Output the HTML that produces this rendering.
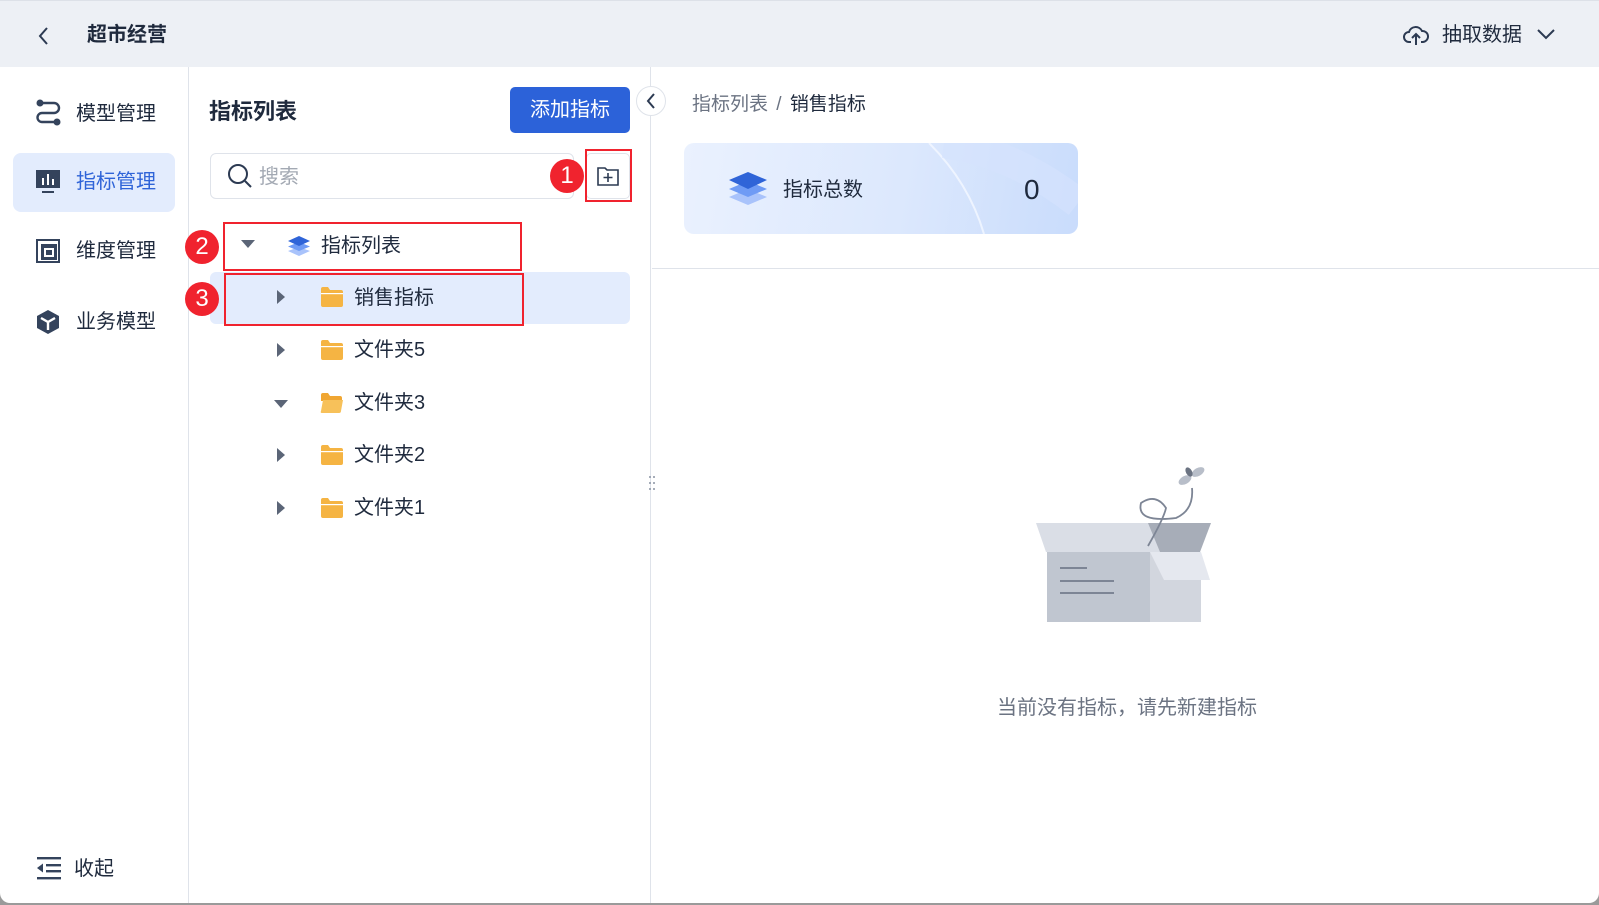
<!DOCTYPE html>
<html><head><meta charset="utf-8">
<style>
*{margin:0;padding:0;box-sizing:border-box}
body{width:1599px;height:905px;overflow:hidden;background:#9a9a9a;font-family:"Liberation Sans","Noto Sans CJK SC",sans-serif;color:#1f2a3d;position:relative}
.win{position:absolute;left:0;top:0;width:1599px;height:903px;background:#fff;border-radius:0 0 10px 10px;overflow:hidden}
.hdr{position:absolute;left:0;top:0;width:1599px;height:67px;background:#edf0f5;border-top:1px solid #dde1e8}
.abs{position:absolute;white-space:nowrap}
.t20{font-size:20px;line-height:24px}
.side{position:absolute;left:0;top:67px;width:189px;height:836px;border-right:1px solid #dfe3ea}
.mid{position:absolute;left:189px;top:67px;width:462px;height:836px;border-right:1px solid #dfe3ea}
.sel{position:absolute;left:13px;top:153px;width:162px;height:59px;background:#e3ecfd;border-radius:8px}
.red{position:absolute;border:2px solid #f0232e}
.badge{position:absolute;width:34px;height:34px;border-radius:50%;background:#f0232e;color:#fff;font-size:24px;line-height:34px;text-align:center}
</style></head><body>
<div class="win">
<div class="hdr">
  <svg class="abs" style="left:37px;top:25px" width="14" height="20" viewBox="0 0 14 20"><path d="M10 2 L3 10 L10 18" fill="none" stroke="#2c3a52" stroke-width="2"/></svg>
  <div class="abs" style="left:87px;top:22px;font-size:20px;font-weight:bold;line-height:24px">超市经营</div>
  <svg class="abs" style="left:1403px;top:22px" width="26" height="24" viewBox="0 0 26 24"><path d="M8 19 H6 A5 5 0 0 1 6 9 A7 7 0 0 1 19 8 A5.5 5.5 0 0 1 20 19 H18" fill="none" stroke="#2c3a52" stroke-width="2"/><path d="M13 22 V12 M9 15 L13 11 L17 15" fill="none" stroke="#2c3a52" stroke-width="2"/></svg>
  <div class="abs t20" style="left:1442px;top:22px">抽取数据</div>
  <svg class="abs" style="left:1536px;top:27px" width="20" height="12" viewBox="0 0 20 12"><path d="M2 2 L10 10 L18 2" fill="none" stroke="#2c3a52" stroke-width="2"/></svg>
</div>

<div class="side"></div>
<div class="sel"></div>
<svg class="abs" style="left:35px;top:99px" width="26" height="28" viewBox="0 0 26 28"><circle cx="5" cy="4" r="3.5" fill="#34435c"/><circle cx="22" cy="23" r="3.5" fill="#34435c"/><path d="M5 4 H19 A5 5 0 0 1 19 14 H7 A4.5 4.5 0 0 0 7 23 H22" fill="none" stroke="#34435c" stroke-width="2.4"/></svg>
<div class="abs t20" style="left:76px;top:102px">模型管理</div>
<svg class="abs" style="left:36px;top:170px" width="24" height="24" viewBox="0 0 24 24"><rect x="0" y="0" width="24" height="18" fill="#34435c"/><rect x="6" y="8" width="2" height="7" fill="#fff"/><rect x="11" y="4" width="2" height="11" fill="#fff"/><rect x="16" y="9" width="2" height="6" fill="#fff"/><rect x="6" y="21" width="12" height="2" fill="#34435c"/></svg>
<div class="abs t20" style="left:76px;top:170px;color:#2f64d8">指标管理</div>
<svg class="abs" style="left:36px;top:239px" width="24" height="24" viewBox="0 0 24 24"><rect x="1" y="1" width="22" height="22" fill="none" stroke="#34435c" stroke-width="2"/><rect x="5" y="5" width="16" height="16" fill="#34435c"/><rect x="9" y="10" width="8" height="7" fill="none" stroke="#fff" stroke-width="2"/></svg>
<div class="abs t20" style="left:76px;top:239px">维度管理</div>
<svg class="abs" style="left:36px;top:309px" width="24" height="26" viewBox="0 0 24 26"><path d="M12 1 L23 7 V19 L12 25 L1 19 V7 Z" fill="#34435c"/><path d="M5 9 L12 13 L19 9 M12 13 V21" fill="none" stroke="#fff" stroke-width="2.4"/></svg>
<div class="abs t20" style="left:76px;top:310px">业务模型</div>
<svg class="abs" style="left:37px;top:856px" width="24" height="24" viewBox="0 0 24 24"><rect x="0" y="1" width="24" height="2.4" fill="#34435c"/><rect x="9" y="8" width="15" height="2.4" fill="#34435c"/><rect x="9" y="14" width="15" height="2.4" fill="#34435c"/><rect x="0" y="21" width="24" height="2.4" fill="#34435c"/><path d="M0 12 L6 7.5 V16.5 Z" fill="#34435c"/></svg>
<div class="abs t20" style="left:74px;top:857px">收起</div>

<div class="mid"></div>
<div class="abs" style="left:209px;top:99px;font-size:22px;font-weight:bold;line-height:26px">指标列表</div>
<div class="abs" style="left:510px;top:87px;width:120px;height:46px;background:#2c62d9;border-radius:5px;color:#fff;font-size:20px;line-height:46px;text-align:center">添加指标</div>
<div class="abs" style="left:636px;top:86px;width:30px;height:30px;border:1px solid #dfe3ea;border-radius:50%;background:#fff"></div>
<svg class="abs" style="left:645px;top:92px" width="12" height="18" viewBox="0 0 12 18"><path d="M9 2 L3 9 L9 16" fill="none" stroke="#2c3a52" stroke-width="2"/></svg>
<div class="abs" style="left:210px;top:153px;width:364px;height:46px;border:1px solid #dfe3ea;border-radius:6px"></div>
<svg class="abs" style="left:227px;top:163px" width="26" height="26" viewBox="0 0 26 26"><circle cx="11" cy="11" r="9" fill="none" stroke="#2c3a52" stroke-width="2"/><path d="M18 18 L24 24" stroke="#2c3a52" stroke-width="2"/></svg>
<div class="abs t20" style="left:259px;top:165px;color:#a3a9b3">搜索</div>
<div class="abs" style="left:586px;top:153px;width:44px;height:46px;border:1px solid #dfe3ea;border-radius:5px"></div>
<svg class="abs" style="left:597px;top:166px" width="22" height="20" viewBox="0 0 22 20"><path d="M1 2 H8 L10 4 H21 V19 H1 Z" fill="none" stroke="#2c3a52" stroke-width="1.6"/><path d="M11 7 V16 M6.5 11.5 H15.5" stroke="#2c3a52" stroke-width="1.6"/></svg>
<div class="red" style="left:585px;top:149px;width:47px;height:53px"></div>
<div class="badge" style="left:550px;top:159px">1</div>

<svg class="abs" style="left:241px;top:240px" width="14" height="9" viewBox="0 0 14 9"><path d="M0 0 H14 L7 8 Z" fill="#5b6577"/></svg>
<svg class="abs" style="left:287px;top:235px" width="24" height="22" viewBox="0 0 24 22"><path d="M12 12 L23 16 L12 21 L1 16 Z" fill="#a9c3fb"/><path d="M12 7 L23 11.5 L12 16 L1 11.5 Z" fill="#6f9bf5"/><path d="M12 1 L23 6 L12 11 L1 6 Z" fill="#2f64d8"/></svg>
<div class="abs t20" style="left:321px;top:234px">指标列表</div>
<div class="red" style="left:223px;top:222px;width:299px;height:49px"></div>
<div class="badge" style="left:185px;top:230px">2</div>

<div class="abs" style="left:210px;top:272px;width:420px;height:52px;background:#e3ecfd;border-radius:6px"></div>
<div class="red" style="left:224px;top:273px;width:300px;height:53px"></div>
<div class="badge" style="left:185px;top:282px">3</div>

<svg class="abs" style="left:277px;top:290px" width="9" height="14" viewBox="0 0 9 14"><path d="M0 0 L8 7 L0 14 Z" fill="#5b6577"/></svg>
<svg class="abs" style="left:320px;top:287px" width="23" height="20" viewBox="0 0 23 20"><path d="M1 2 Q1 0 3 0 H8 L10 3 H21 Q23 3 23 5 V18 Q23 20 21 20 H3 Q1 20 1 18 Z" fill="#f5b443"/><rect x="1" y="6" width="22" height="1.2" fill="#fff"/></svg>
<div class="abs t20" style="left:354px;top:286px">销售指标</div>

<svg class="abs" style="left:277px;top:343px" width="9" height="14" viewBox="0 0 9 14"><path d="M0 0 L8 7 L0 14 Z" fill="#5b6577"/></svg>
<svg class="abs" style="left:320px;top:340px" width="23" height="20" viewBox="0 0 23 20"><path d="M1 2 Q1 0 3 0 H8 L10 3 H21 Q23 3 23 5 V18 Q23 20 21 20 H3 Q1 20 1 18 Z" fill="#f5b443"/><rect x="1" y="6" width="22" height="1.2" fill="#fff"/></svg>
<div class="abs t20" style="left:354px;top:338px">文件夹5</div>

<svg class="abs" style="left:274px;top:400px" width="14" height="9" viewBox="0 0 14 9"><path d="M0 0 H14 L7 8 Z" fill="#5b6577"/></svg>
<svg class="abs" style="left:320px;top:393px" width="23" height="20" viewBox="0 0 23 20"><path d="M1 2 Q1 0 3 0 H8 L10 3 H20 Q22 3 22 5 V8 H1 Z" fill="#f0a632"/><path d="M3 7 H23 L21 18 Q21 20 19 20 H2 Q0 20 1 18 Z" fill="#f7c15a"/></svg>
<div class="abs t20" style="left:354px;top:391px">文件夹3</div>

<svg class="abs" style="left:277px;top:448px" width="9" height="14" viewBox="0 0 9 14"><path d="M0 0 L8 7 L0 14 Z" fill="#5b6577"/></svg>
<svg class="abs" style="left:320px;top:445px" width="23" height="20" viewBox="0 0 23 20"><path d="M1 2 Q1 0 3 0 H8 L10 3 H21 Q23 3 23 5 V18 Q23 20 21 20 H3 Q1 20 1 18 Z" fill="#f5b443"/><rect x="1" y="6" width="22" height="1.2" fill="#fff"/></svg>
<div class="abs t20" style="left:354px;top:443px">文件夹2</div>

<svg class="abs" style="left:277px;top:501px" width="9" height="14" viewBox="0 0 9 14"><path d="M0 0 L8 7 L0 14 Z" fill="#5b6577"/></svg>
<svg class="abs" style="left:320px;top:498px" width="23" height="20" viewBox="0 0 23 20"><path d="M1 2 Q1 0 3 0 H8 L10 3 H21 Q23 3 23 5 V18 Q23 20 21 20 H3 Q1 20 1 18 Z" fill="#f5b443"/><rect x="1" y="6" width="22" height="1.2" fill="#fff"/></svg>
<div class="abs t20" style="left:354px;top:496px">文件夹1</div>

<svg class="abs" style="left:648px;top:475px" width="8" height="16" viewBox="0 0 8 16"><g fill="#8a93a3"><circle cx="2" cy="2" r="1"/><circle cx="6" cy="2" r="1"/><circle cx="2" cy="8" r="1"/><circle cx="6" cy="8" r="1"/><circle cx="2" cy="14" r="1"/><circle cx="6" cy="14" r="1"/></g></svg>

<div class="abs" style="left:692px;top:94px;font-size:19px;line-height:22px;color:#6b7382">指标列表 <span style="margin:0 3px">/</span> <span style="color:#1f2a3d">销售指标</span></div>
<div class="abs" style="left:684px;top:143px;width:394px;height:91px;border-radius:10px;overflow:hidden;background:linear-gradient(100deg,#eaf1fe 0%,#dce8fd 55%,#c9dcfc 100%)">
  <svg width="394" height="91" style="position:absolute;left:0;top:0"><path d="M245 0 Q285 40 300 91" fill="none" stroke="#f4f8ff" stroke-width="2" opacity=".8"/><path d="M260 0 Q330 10 394 60" fill="none" stroke="#d5e3fd" stroke-width="30" opacity=".6"/></svg>
</div>
<svg class="abs" style="left:728px;top:171px" width="40" height="36" viewBox="0 0 40 36"><path d="M20 18 L39 26 L20 34 L1 26 Z" fill="#a9c3fb"/><path d="M20 10 L39 18 L20 26 L1 18 Z" fill="#6f9bf5"/><path d="M20 1 L39 9 L20 18 L1 9 Z" fill="#2f64d8"/></svg>
<div class="abs t20" style="left:783px;top:178px">指标总数</div>
<div class="abs" style="left:1024px;top:174px;font-size:28px;line-height:32px">0</div>
<div class="abs" style="left:652px;top:268px;width:947px;height:1px;background:#dfe3ea"></div>

<svg class="abs" style="left:1036px;top:448px" width="180" height="175" viewBox="0 0 180 175">
  <path d="M0 75 L114 75 L126 104 L10 104 Z" fill="#dadee6"/>
  <path d="M112 75 L175 75 L164 104 L124 104 Z" fill="#a7adb8"/>
  <rect x="11" y="104" width="103" height="70" fill="#c0c6d0"/>
  <rect x="114" y="104" width="51" height="70" fill="#d2d6de"/>
  <path d="M114 104 L165 104 L174 132 L128 132 Z" fill="#e5e8ef"/>
  <path d="M24 120 H51 M24 133 H78 M24 145 H78" stroke="#7d8595" stroke-width="2"/>
  <path d="M112 98 Q128 70 130 60 Q120 45 105 55 Q100 75 140 70 Q158 62 156 40" fill="none" stroke="#7d8595" stroke-width="1.8"/>
  <ellipse cx="149" cy="32" rx="7" ry="4" fill="#b8bec9" transform="rotate(-30 149 32)"/>
  <ellipse cx="162" cy="24" rx="7" ry="4" fill="#b8bec9" transform="rotate(-30 162 24)"/>
  <ellipse cx="153" cy="24" rx="3" ry="5" fill="#6b7382" transform="rotate(-30 153 24)"/>
</svg>
<div class="abs" style="left:997px;top:696px;font-size:20px;line-height:24px;color:#6b7382">当前没有指标，请先新建指标</div>
</div>
</body></html>
